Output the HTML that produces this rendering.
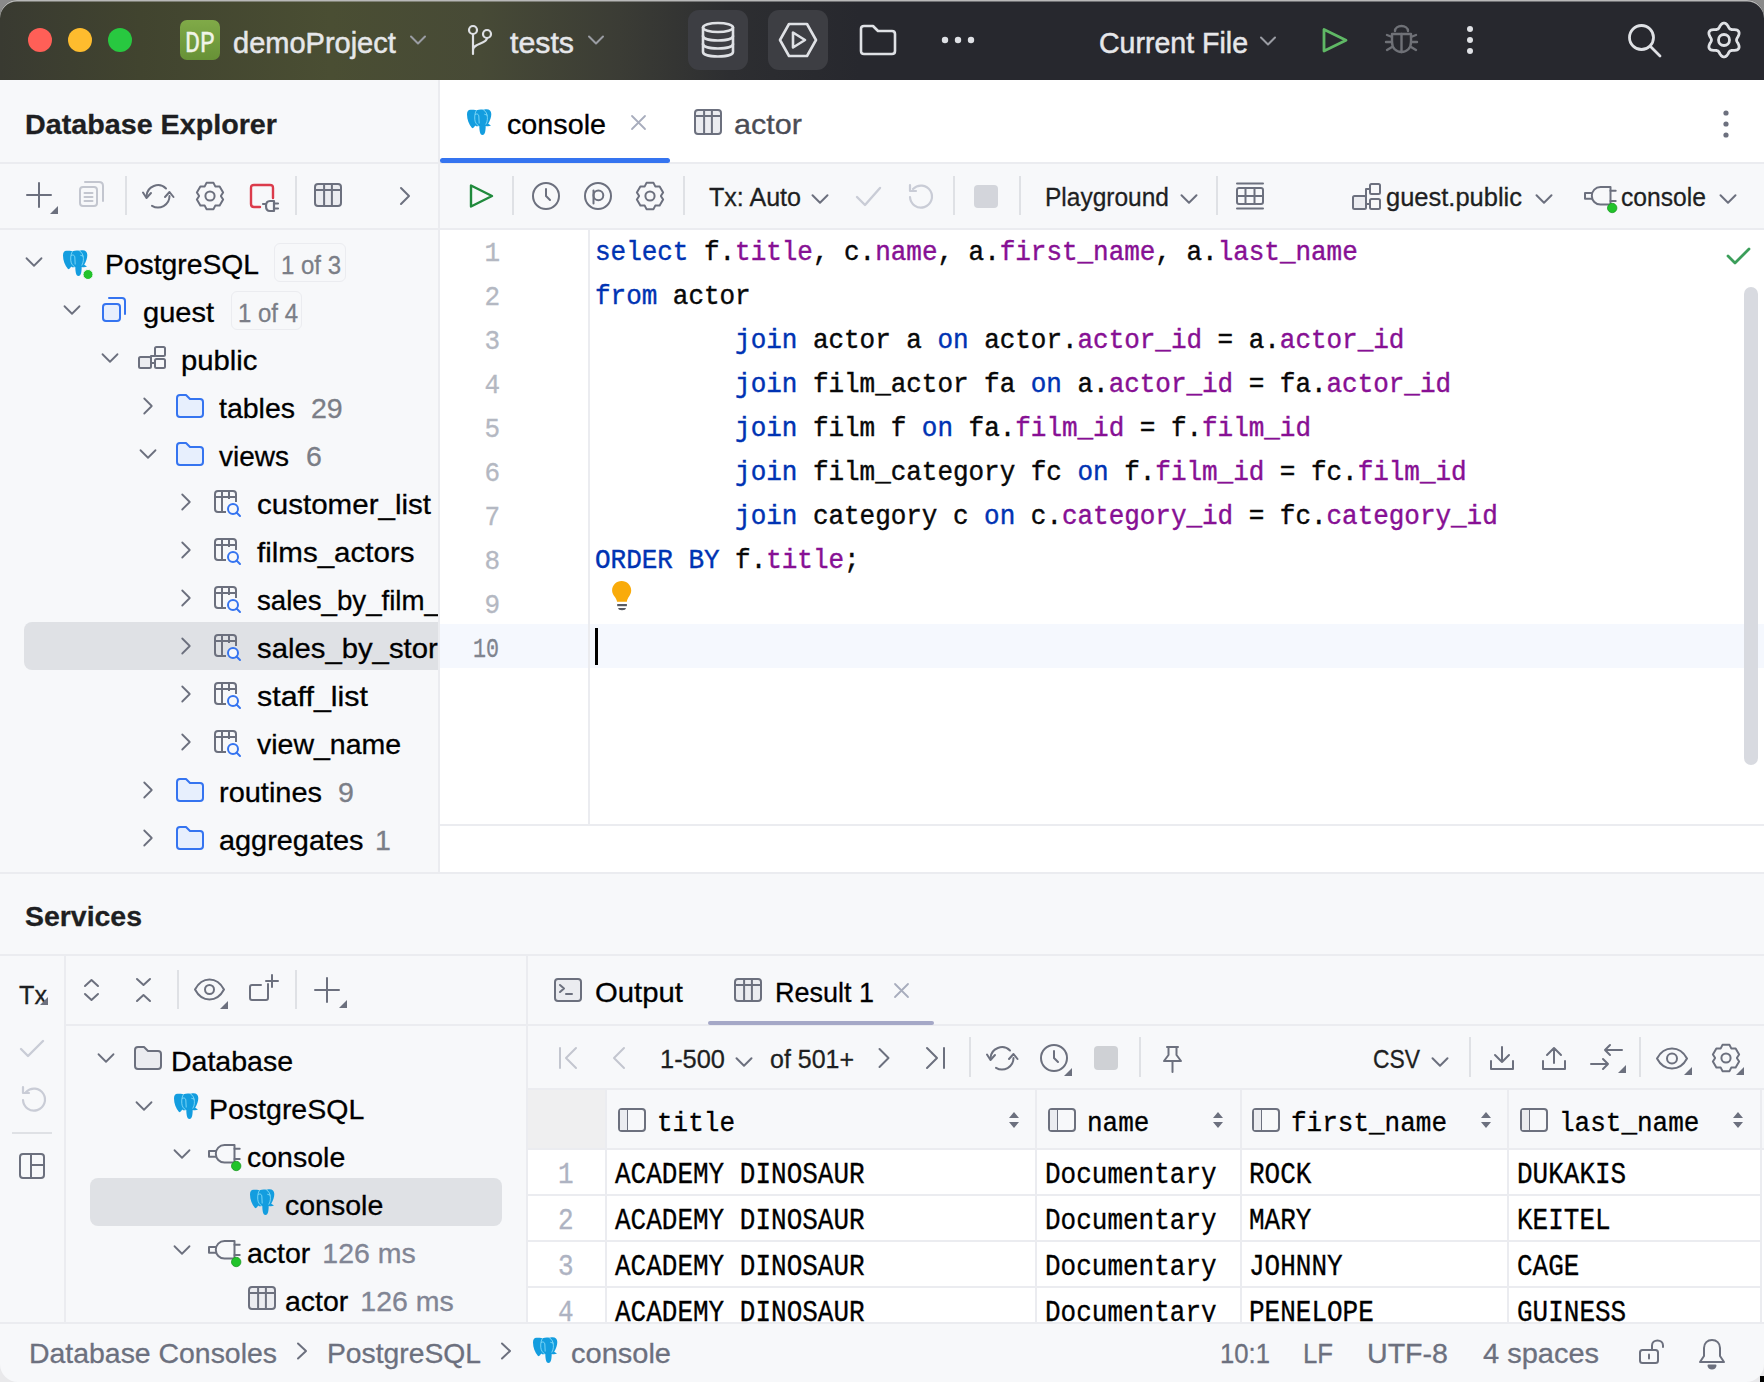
<!DOCTYPE html><html><head><meta charset="utf-8"><style>html,body{margin:0;padding:0;width:1764px;height:1382px;overflow:hidden;background:#f7f8fa;}body{position:relative;}div{-webkit-text-stroke:0.3px currentColor;}</style></head><body>
<div style="position:absolute;left:0px;top:0px;width:1764px;height:1382px;background:#f7f8fa;border-radius:0px;"></div>
<div style="position:absolute;left:0px;top:0px;width:20px;height:20px;background:#8a8a8a;border-radius:0px;"></div>
<div style="position:absolute;left:1744px;top:0px;width:20px;height:20px;background:#8a8a8a;border-radius:0px;"></div>
<div style="position:absolute;left:0px;top:0px;width:1764px;height:80px;background:#27282e;border-radius:0px;border-radius:17px 17px 0 0;box-shadow:inset 0 1.5px 0 #b8b8b8;background:linear-gradient(90deg,#393a31 0px,#41442f 140px,#4a4e33 330px,#474a36 480px,#3b3c35 620px,#2d2e31 730px,#27282e 860px);"></div>
<div style="position:absolute;left:440px;top:80px;width:1324px;height:83px;background:#ffffff;border-radius:0px;"></div>
<div style="position:absolute;left:440px;top:230px;width:1324px;height:642px;background:#ffffff;border-radius:0px;"></div>
<div style="position:absolute;left:438px;top:80px;width:2px;height:792px;background:#ebecf0;border-radius:0px;"></div>
<div style="position:absolute;left:0px;top:162px;width:440px;height:2px;background:#ebecf0;border-radius:0px;"></div>
<div style="position:absolute;left:440px;top:162px;width:1324px;height:2px;background:#ebecf0;border-radius:0px;"></div>
<div style="position:absolute;left:0px;top:228px;width:1764px;height:2px;background:#ebecf0;border-radius:0px;"></div>
<div style="position:absolute;left:588px;top:230px;width:2px;height:594px;background:#ebecf0;border-radius:0px;"></div>
<div style="position:absolute;left:440px;top:824px;width:1324px;height:2px;background:#ebecf0;border-radius:0px;"></div>
<div style="position:absolute;left:0px;top:872px;width:1764px;height:2px;background:#ebecf0;border-radius:0px;"></div>
<div style="position:absolute;left:0px;top:954px;width:1764px;height:2px;background:#ebecf0;border-radius:0px;"></div>
<div style="position:absolute;left:64px;top:956px;width:2px;height:366px;background:#ebecf0;border-radius:0px;"></div>
<div style="position:absolute;left:66px;top:1024px;width:1698px;height:2px;background:#ebecf0;border-radius:0px;"></div>
<div style="position:absolute;left:526px;top:956px;width:2px;height:366px;background:#ebecf0;border-radius:0px;"></div>
<div style="position:absolute;left:528px;top:1088px;width:1236px;height:2px;background:#ebecf0;border-radius:0px;"></div>
<div style="position:absolute;left:0px;top:1322px;width:1764px;height:2px;background:#ebecf0;border-radius:0px;"></div>
<div style="position:absolute;left:180px;top:20px;width:40px;height:40px;background:#6d9a3a;border-radius:7px;background:linear-gradient(180deg,#80aa48,#679136);"></div>
<div style="position:absolute;left:185px;top:29.18px;font:400 28px/31.72px 'Liberation Mono', monospace;color:#f0f4e8;white-space:pre;transform:scale(0.8927,1.0800);transform-origin:0 23.32px;">DP</div>
<div style="position:absolute;left:233px;top:26.75px;font:400 29px/32.39px 'Liberation Sans', sans-serif;color:#e6e7ea;white-space:pre;-webkit-text-stroke:0.5px #e6e7ea;">demoProject</div>
<div style="position:absolute;left:510px;top:26.75px;font:400 29px/32.39px 'Liberation Sans', sans-serif;color:#e6e7ea;white-space:pre;transform:scale(1.0450,1.0000);transform-origin:0 26.25px;-webkit-text-stroke:0.5px #e6e7ea;">tests</div>
<div style="position:absolute;left:688px;top:10px;width:60px;height:60px;background:#3d3e43;border-radius:11px;"></div>
<div style="position:absolute;left:768px;top:10px;width:60px;height:60px;background:#3d3e43;border-radius:11px;"></div>
<div style="position:absolute;left:1099px;top:26.75px;font:400 29px/32.39px 'Liberation Sans', sans-serif;color:#e6e7ea;white-space:pre;transform:scale(0.9836,1.0000);transform-origin:0 26.25px;-webkit-text-stroke:0.5px #e6e7ea;">Current File</div>
<div style="position:absolute;left:25px;top:108.81px;font:700 28.5px/31.83px 'Liberation Sans', sans-serif;color:#1e1f22;white-space:pre;transform:scale(1.0068,1.0000);transform-origin:0 25.79px;">Database Explorer</div>
<div style="position:absolute;left:125px;top:176px;width:2px;height:39px;background:#dfe1e5;border-radius:0px;"></div>
<div style="position:absolute;left:295px;top:176px;width:2px;height:39px;background:#dfe1e5;border-radius:0px;"></div>
<div style="position:absolute;left:24px;top:622px;width:460px;height:48px;background:#dfe1e5;border-radius:8px;"></div>
<div style="position:absolute;left:105px;top:248.71px;font:400 28.5px/31.83px 'Liberation Sans', sans-serif;color:#000000;white-space:pre;transform:scale(0.9919,1.0000);transform-origin:0 25.79px;">PostgreSQL</div>
<div style="position:absolute;left:274px;top:243px;width:72px;height:39px;background:rgba(0,0,0,0);border-radius:6px;border:1.5px solid #ebecf0;box-sizing:border-box;"></div>
<div style="position:absolute;left:280.5px;top:251.88px;font:400 25px/27.93px 'Liberation Sans', sans-serif;color:#7b7e87;white-space:pre;transform:scale(0.9593,1.0000);transform-origin:0 22.62px;">1 of 3</div>
<div style="position:absolute;left:143px;top:296.71px;font:400 28.5px/31.83px 'Liberation Sans', sans-serif;color:#000000;white-space:pre;transform:scale(1.0184,1.0000);transform-origin:0 25.79px;">guest</div>
<div style="position:absolute;left:231px;top:291px;width:71px;height:39px;background:rgba(0,0,0,0);border-radius:6px;border:1.5px solid #ebecf0;box-sizing:border-box;"></div>
<div style="position:absolute;left:237.5px;top:299.88px;font:400 25px/27.93px 'Liberation Sans', sans-serif;color:#7b7e87;white-space:pre;transform:scale(0.9593,1.0000);transform-origin:0 22.62px;">1 of 4</div>
<div style="position:absolute;left:181px;top:344.71px;font:400 28.5px/31.83px 'Liberation Sans', sans-serif;color:#000000;white-space:pre;transform:scale(1.0273,1.0000);transform-origin:0 25.79px;">public</div>
<div style="position:absolute;left:219px;top:392.71px;font:400 28.5px/31.83px 'Liberation Sans', sans-serif;color:#000000;white-space:pre;">tables</div>
<div style="position:absolute;left:311px;top:392.71px;font:400 28.5px/31.83px 'Liberation Sans', sans-serif;color:#7b7e87;white-space:pre;">29</div>
<div style="position:absolute;left:219px;top:440.71px;font:400 28.5px/31.83px 'Liberation Sans', sans-serif;color:#000000;white-space:pre;transform:scale(0.9822,1.0000);transform-origin:0 25.79px;">views</div>
<div style="position:absolute;left:306px;top:440.71px;font:400 28.5px/31.83px 'Liberation Sans', sans-serif;color:#7b7e87;white-space:pre;">6</div>
<div style="position:absolute;left:257px;top:488.71px;font:400 28.5px/31.83px 'Liberation Sans', sans-serif;color:#000000;white-space:pre;transform:scale(1.0364,1.0000);transform-origin:0 25.79px;">customer_list</div>
<div style="position:absolute;left:257px;top:536.71px;font:400 28.5px/31.83px 'Liberation Sans', sans-serif;color:#000000;white-space:pre;transform:scale(1.0359,1.0000);transform-origin:0 25.79px;">films_actors</div>
<div style="position:absolute;left:257px;top:584.71px;font:400 28.5px/31.83px 'Liberation Sans', sans-serif;color:#000000;white-space:pre;transform:scale(0.9704,1.0000);transform-origin:0 25.79px;">sales_by_film_category</div>
<div style="position:absolute;left:257px;top:632.71px;font:400 28.5px/31.83px 'Liberation Sans', sans-serif;color:#000000;white-space:pre;transform:scale(1.0277,1.0000);transform-origin:0 25.79px;">sales_by_store</div>
<div style="position:absolute;left:257px;top:680.71px;font:400 28.5px/31.83px 'Liberation Sans', sans-serif;color:#000000;white-space:pre;transform:scale(1.0671,1.0000);transform-origin:0 25.79px;">staff_list</div>
<div style="position:absolute;left:257px;top:728.71px;font:400 28.5px/31.83px 'Liberation Sans', sans-serif;color:#000000;white-space:pre;">view_name</div>
<div style="position:absolute;left:219px;top:776.71px;font:400 28.5px/31.83px 'Liberation Sans', sans-serif;color:#000000;white-space:pre;transform:scale(1.0158,1.0000);transform-origin:0 25.79px;">routines</div>
<div style="position:absolute;left:338px;top:776.71px;font:400 28.5px/31.83px 'Liberation Sans', sans-serif;color:#7b7e87;white-space:pre;">9</div>
<div style="position:absolute;left:219px;top:824.71px;font:400 28.5px/31.83px 'Liberation Sans', sans-serif;color:#000000;white-space:pre;transform:scale(1.0132,1.0000);transform-origin:0 25.79px;">aggregates</div>
<div style="position:absolute;left:375px;top:824.71px;font:400 28.5px/31.83px 'Liberation Sans', sans-serif;color:#7b7e87;white-space:pre;">1</div>
<div style="position:absolute;left:440px;top:230px;width:1324px;height:642px;background:#ffffff;border-radius:0px;"></div>
<div style="position:absolute;left:438px;top:80px;width:2px;height:792px;background:#ebecf0;border-radius:0px;"></div>
<div style="position:absolute;left:0px;top:162px;width:440px;height:2px;background:#ebecf0;border-radius:0px;"></div>
<div style="position:absolute;left:440px;top:162px;width:1324px;height:2px;background:#ebecf0;border-radius:0px;"></div>
<div style="position:absolute;left:0px;top:228px;width:1764px;height:2px;background:#ebecf0;border-radius:0px;"></div>
<div style="position:absolute;left:588px;top:230px;width:2px;height:594px;background:#ebecf0;border-radius:0px;"></div>
<div style="position:absolute;left:440px;top:824px;width:1324px;height:2px;background:#ebecf0;border-radius:0px;"></div>
<div style="position:absolute;left:507px;top:108.91px;font:400 28.5px/31.83px 'Liberation Sans', sans-serif;color:#000000;white-space:pre;transform:scale(1.0078,1.0000);transform-origin:0 25.79px;">console</div>
<div style="position:absolute;left:440px;top:158px;width:230px;height:5px;background:#3574f0;border-radius:2.5px;"></div>
<div style="position:absolute;left:734px;top:108.91px;font:400 28.5px/31.83px 'Liberation Sans', sans-serif;color:#4b4d55;white-space:pre;transform:scale(1.0732,1.0000);transform-origin:0 25.79px;">actor</div>
<div style="position:absolute;left:512px;top:176px;width:2px;height:39px;background:#dfe1e5;border-radius:0px;"></div>
<div style="position:absolute;left:683px;top:176px;width:2px;height:39px;background:#dfe1e5;border-radius:0px;"></div>
<div style="position:absolute;left:709px;top:183.47px;font:400 26px/29.04px 'Liberation Sans', sans-serif;color:#1e1f22;white-space:pre;transform:scale(0.9645,1.0000);transform-origin:0 23.53px;">Tx: Auto</div>
<div style="position:absolute;left:953px;top:176px;width:2px;height:39px;background:#dfe1e5;border-radius:0px;"></div>
<div style="position:absolute;left:974px;top:185px;width:24px;height:23px;background:#d3d5db;border-radius:4px;"></div>
<div style="position:absolute;left:1019px;top:176px;width:2px;height:39px;background:#dfe1e5;border-radius:0px;"></div>
<div style="position:absolute;left:1045px;top:183.47px;font:400 26px/29.04px 'Liberation Sans', sans-serif;color:#1e1f22;white-space:pre;transform:scale(0.9427,1.0000);transform-origin:0 23.53px;">Playground</div>
<div style="position:absolute;left:1216px;top:176px;width:2px;height:39px;background:#dfe1e5;border-radius:0px;"></div>
<div style="position:absolute;left:1386px;top:183.47px;font:400 26px/29.04px 'Liberation Sans', sans-serif;color:#1e1f22;white-space:pre;transform:scale(0.9801,1.0000);transform-origin:0 23.53px;">guest.public</div>
<div style="position:absolute;left:1621px;top:183.47px;font:400 26px/29.04px 'Liberation Sans', sans-serif;color:#1e1f22;white-space:pre;transform:scale(0.9485,1.0000);transform-origin:0 23.53px;">console</div>
<div style="position:absolute;left:440px;top:624px;width:1324px;height:44px;background:#f5f8fe;border-radius:0px;"></div>
<div style="position:absolute;left:588px;top:624px;width:2px;height:44px;background:#ebecf0;border-radius:0px;"></div>
<div style="position:absolute;left:595px;top:239.34px;font:400 26px/29.46px &quot;Liberation Mono&quot;, monospace;white-space:pre;letter-spacing:-0.040px;-webkit-text-stroke:0.4px currentColor;transform:scaleY(1.05);transform-origin:0 21.66px;"><span style="color:#0033b3">select</span><span style="color:#080808"> f.</span><span style="color:#871094">title</span><span style="color:#080808">, c.</span><span style="color:#871094">name</span><span style="color:#080808">, a.</span><span style="color:#871094">first_name</span><span style="color:#080808">, a.</span><span style="color:#871094">last_name</span></div>
<div style="position:absolute;left:595px;top:283.34px;font:400 26px/29.46px &quot;Liberation Mono&quot;, monospace;white-space:pre;letter-spacing:-0.040px;-webkit-text-stroke:0.4px currentColor;transform:scaleY(1.05);transform-origin:0 21.66px;"><span style="color:#0033b3">from</span><span style="color:#080808"> actor</span></div>
<div style="position:absolute;left:595px;top:327.34px;font:400 26px/29.46px &quot;Liberation Mono&quot;, monospace;white-space:pre;letter-spacing:-0.040px;-webkit-text-stroke:0.4px currentColor;transform:scaleY(1.05);transform-origin:0 21.66px;"><span style="color:#080808">         </span><span style="color:#0033b3">join</span><span style="color:#080808"> actor a </span><span style="color:#0033b3">on</span><span style="color:#080808"> actor.</span><span style="color:#871094">actor_id</span><span style="color:#080808"> = a.</span><span style="color:#871094">actor_id</span></div>
<div style="position:absolute;left:595px;top:371.34px;font:400 26px/29.46px &quot;Liberation Mono&quot;, monospace;white-space:pre;letter-spacing:-0.040px;-webkit-text-stroke:0.4px currentColor;transform:scaleY(1.05);transform-origin:0 21.66px;"><span style="color:#080808">         </span><span style="color:#0033b3">join</span><span style="color:#080808"> film_actor fa </span><span style="color:#0033b3">on</span><span style="color:#080808"> a.</span><span style="color:#871094">actor_id</span><span style="color:#080808"> = fa.</span><span style="color:#871094">actor_id</span></div>
<div style="position:absolute;left:595px;top:415.34px;font:400 26px/29.46px &quot;Liberation Mono&quot;, monospace;white-space:pre;letter-spacing:-0.040px;-webkit-text-stroke:0.4px currentColor;transform:scaleY(1.05);transform-origin:0 21.66px;"><span style="color:#080808">         </span><span style="color:#0033b3">join</span><span style="color:#080808"> film f </span><span style="color:#0033b3">on</span><span style="color:#080808"> fa.</span><span style="color:#871094">film_id</span><span style="color:#080808"> = f.</span><span style="color:#871094">film_id</span></div>
<div style="position:absolute;left:595px;top:459.34px;font:400 26px/29.46px &quot;Liberation Mono&quot;, monospace;white-space:pre;letter-spacing:-0.040px;-webkit-text-stroke:0.4px currentColor;transform:scaleY(1.05);transform-origin:0 21.66px;"><span style="color:#080808">         </span><span style="color:#0033b3">join</span><span style="color:#080808"> film_category fc </span><span style="color:#0033b3">on</span><span style="color:#080808"> f.</span><span style="color:#871094">film_id</span><span style="color:#080808"> = fc.</span><span style="color:#871094">film_id</span></div>
<div style="position:absolute;left:595px;top:503.34px;font:400 26px/29.46px &quot;Liberation Mono&quot;, monospace;white-space:pre;letter-spacing:-0.040px;-webkit-text-stroke:0.4px currentColor;transform:scaleY(1.05);transform-origin:0 21.66px;"><span style="color:#080808">         </span><span style="color:#0033b3">join</span><span style="color:#080808"> category c </span><span style="color:#0033b3">on</span><span style="color:#080808"> c.</span><span style="color:#871094">category_id</span><span style="color:#080808"> = fc.</span><span style="color:#871094">category_id</span></div>
<div style="position:absolute;left:595px;top:547.34px;font:400 26px/29.46px &quot;Liberation Mono&quot;, monospace;white-space:pre;letter-spacing:-0.040px;-webkit-text-stroke:0.4px currentColor;transform:scaleY(1.05);transform-origin:0 21.66px;"><span style="color:#0033b3">ORDER BY</span><span style="color:#080808"> f.</span><span style="color:#871094">title</span><span style="color:#080808">;</span></div>
<div style="position:absolute;left:484.4px;top:239.84px;font:400 26px/29.46px 'Liberation Mono', monospace;color:#b4b8c2;white-space:pre;transform:scale(1.0000,1.0600);transform-origin:0 21.66px;">1</div>
<div style="position:absolute;left:484.4px;top:283.84px;font:400 26px/29.46px 'Liberation Mono', monospace;color:#b4b8c2;white-space:pre;transform:scale(1.0000,1.0600);transform-origin:0 21.66px;">2</div>
<div style="position:absolute;left:484.4px;top:327.84px;font:400 26px/29.46px 'Liberation Mono', monospace;color:#b4b8c2;white-space:pre;transform:scale(1.0000,1.0600);transform-origin:0 21.66px;">3</div>
<div style="position:absolute;left:484.4px;top:371.84px;font:400 26px/29.46px 'Liberation Mono', monospace;color:#b4b8c2;white-space:pre;transform:scale(1.0000,1.0600);transform-origin:0 21.66px;">4</div>
<div style="position:absolute;left:484.4px;top:415.84px;font:400 26px/29.46px 'Liberation Mono', monospace;color:#b4b8c2;white-space:pre;transform:scale(1.0000,1.0600);transform-origin:0 21.66px;">5</div>
<div style="position:absolute;left:484.4px;top:459.84px;font:400 26px/29.46px 'Liberation Mono', monospace;color:#b4b8c2;white-space:pre;transform:scale(1.0000,1.0600);transform-origin:0 21.66px;">6</div>
<div style="position:absolute;left:484.4px;top:503.84px;font:400 26px/29.46px 'Liberation Mono', monospace;color:#b4b8c2;white-space:pre;transform:scale(1.0000,1.0600);transform-origin:0 21.66px;">7</div>
<div style="position:absolute;left:484.4px;top:547.84px;font:400 26px/29.46px 'Liberation Mono', monospace;color:#b4b8c2;white-space:pre;transform:scale(1.0000,1.0600);transform-origin:0 21.66px;">8</div>
<div style="position:absolute;left:484.4px;top:591.84px;font:400 26px/29.46px 'Liberation Mono', monospace;color:#b4b8c2;white-space:pre;transform:scale(1.0000,1.0600);transform-origin:0 21.66px;">9</div>
<div style="position:absolute;left:473px;top:635.84px;font:400 26px/29.46px 'Liberation Mono', monospace;color:#80848f;white-space:pre;transform:scale(0.8332,1.0600);transform-origin:0 21.66px;">10</div>
<div style="position:absolute;left:595px;top:628px;width:3px;height:37px;background:#000000;border-radius:0px;"></div>
<div style="position:absolute;left:1744px;top:287px;width:14px;height:478px;background:#d8dae0;border-radius:7px;"></div>
<div style="position:absolute;left:25px;top:901.01px;font:700 28.5px/31.83px 'Liberation Sans', sans-serif;color:#1e1f22;white-space:pre;transform:scale(0.9977,1.0000);transform-origin:0 25.79px;">Services</div>
<div style="position:absolute;left:19px;top:981.47px;font:400 26px/29.04px 'Liberation Sans', sans-serif;color:#1e1f22;white-space:pre;transform:scale(0.9695,1.0000);transform-origin:0 23.53px;">Tx</div>
<div style="position:absolute;left:12px;top:1132px;width:40px;height:2px;background:#dfe1e5;border-radius:0px;"></div>
<div style="position:absolute;left:177px;top:970px;width:2px;height:39px;background:#dfe1e5;border-radius:0px;"></div>
<div style="position:absolute;left:295px;top:970px;width:2px;height:39px;background:#dfe1e5;border-radius:0px;"></div>
<div style="position:absolute;left:90px;top:1178px;width:412px;height:48px;background:#dfe1e5;border-radius:8px;"></div>
<div style="position:absolute;left:171px;top:1045.71px;font:400 28.5px/31.83px 'Liberation Sans', sans-serif;color:#000000;white-space:pre;">Database</div>
<div style="position:absolute;left:209px;top:1093.71px;font:400 28.5px/31.83px 'Liberation Sans', sans-serif;color:#000000;white-space:pre;">PostgreSQL</div>
<div style="position:absolute;left:247px;top:1141.71px;font:400 28.5px/31.83px 'Liberation Sans', sans-serif;color:#000000;white-space:pre;">console</div>
<div style="position:absolute;left:285px;top:1189.71px;font:400 28.5px/31.83px 'Liberation Sans', sans-serif;color:#000000;white-space:pre;">console</div>
<div style="position:absolute;left:247px;top:1237.71px;font:400 28.5px/31.83px 'Liberation Sans', sans-serif;color:#000000;white-space:pre;">actor</div>
<div style="position:absolute;left:322.3612890625px;top:1237.71px;font:400 28.5px/31.83px 'Liberation Sans', sans-serif;color:#818594;white-space:pre;">126 ms</div>
<div style="position:absolute;left:285px;top:1285.71px;font:400 28.5px/31.83px 'Liberation Sans', sans-serif;color:#000000;white-space:pre;">actor</div>
<div style="position:absolute;left:360.3612890625px;top:1285.71px;font:400 28.5px/31.83px 'Liberation Sans', sans-serif;color:#818594;white-space:pre;">126 ms</div>
<div style="position:absolute;left:595px;top:976.81px;font:400 28.5px/31.83px 'Liberation Sans', sans-serif;color:#000000;white-space:pre;transform:scale(1.0286,1.0000);transform-origin:0 25.79px;">Output</div>
<div style="position:absolute;left:775px;top:976.81px;font:400 28.5px/31.83px 'Liberation Sans', sans-serif;color:#000000;white-space:pre;transform:scale(0.9469,1.0000);transform-origin:0 25.79px;">Result 1</div>
<div style="position:absolute;left:708px;top:1021px;width:226px;height:4px;background:#a5a8c7;border-radius:2px;"></div>
<div style="position:absolute;left:660px;top:1045.47px;font:400 26px/29.04px 'Liberation Sans', sans-serif;color:#1e1f22;white-space:pre;transform:scale(0.9774,1.0000);transform-origin:0 23.53px;">1-500</div>
<div style="position:absolute;left:770px;top:1045.47px;font:400 26px/29.04px 'Liberation Sans', sans-serif;color:#1e1f22;white-space:pre;transform:scale(0.9603,1.0000);transform-origin:0 23.53px;">of 501+</div>
<div style="position:absolute;left:969px;top:1037px;width:2px;height:40px;background:#dfe1e5;border-radius:0px;"></div>
<div style="position:absolute;left:1094px;top:1046px;width:24px;height:24px;background:#cfd1d5;border-radius:4px;"></div>
<div style="position:absolute;left:1139px;top:1037px;width:2px;height:40px;background:#dfe1e5;border-radius:0px;"></div>
<div style="position:absolute;left:1373px;top:1045.47px;font:400 26px/29.04px 'Liberation Sans', sans-serif;color:#1e1f22;white-space:pre;transform:scale(0.8791,1.0000);transform-origin:0 23.53px;">CSV</div>
<div style="position:absolute;left:1469px;top:1037px;width:2px;height:40px;background:#dfe1e5;border-radius:0px;"></div>
<div style="position:absolute;left:1639px;top:1037px;width:2px;height:40px;background:#dfe1e5;border-radius:0px;"></div>
<div style="position:absolute;left:528px;top:1090px;width:1236px;height:232px;background:#ffffff;border-radius:0px;"></div>
<div style="position:absolute;left:528px;top:1090px;width:1236px;height:58px;background:#f7f8fa;border-radius:0px;"></div>
<div style="position:absolute;left:528px;top:1090px;width:77px;height:58px;background:#efeff0;border-radius:0px;"></div>
<div style="position:absolute;left:528px;top:1148px;width:1236px;height:2px;background:#ebecf0;border-radius:0px;"></div>
<div style="position:absolute;left:528px;top:1194px;width:1234px;height:2px;background:#ebecf0;border-radius:0px;"></div>
<div style="position:absolute;left:528px;top:1240px;width:1234px;height:2px;background:#ebecf0;border-radius:0px;"></div>
<div style="position:absolute;left:528px;top:1286px;width:1234px;height:2px;background:#ebecf0;border-radius:0px;"></div>
<div style="position:absolute;left:605px;top:1090px;width:2px;height:232px;background:#ebecf0;border-radius:0px;"></div>
<div style="position:absolute;left:1035px;top:1090px;width:2px;height:232px;background:#ebecf0;border-radius:0px;"></div>
<div style="position:absolute;left:1240px;top:1090px;width:2px;height:232px;background:#ebecf0;border-radius:0px;"></div>
<div style="position:absolute;left:1507px;top:1090px;width:2px;height:232px;background:#ebecf0;border-radius:0px;"></div>
<div style="position:absolute;left:1760px;top:1090px;width:2px;height:232px;background:#ebecf0;border-radius:0px;"></div>
<div style="position:absolute;left:528px;top:1088px;width:1236px;height:2px;background:#ebecf0;border-radius:0px;"></div>
<div style="position:absolute;left:657px;top:1109.84px;font:400 26px/29.46px 'Liberation Mono', monospace;color:#000000;white-space:pre;transform:scale(1.0000,1.0600);transform-origin:0 21.66px;">title</div>
<div style="position:absolute;left:1087px;top:1109.84px;font:400 26px/29.46px 'Liberation Mono', monospace;color:#000000;white-space:pre;transform:scale(1.0000,1.0600);transform-origin:0 21.66px;">name</div>
<div style="position:absolute;left:1291px;top:1109.84px;font:400 26px/29.46px 'Liberation Mono', monospace;color:#000000;white-space:pre;transform:scale(1.0000,1.0600);transform-origin:0 21.66px;">first_name</div>
<div style="position:absolute;left:1559px;top:1109.84px;font:400 26px/29.46px 'Liberation Mono', monospace;color:#000000;white-space:pre;transform:scale(1.0000,1.0600);transform-origin:0 21.66px;">last_name</div>
<div style="position:absolute;left:558px;top:1161.84px;font:400 26px/29.46px 'Liberation Mono', monospace;color:#aeb3c2;white-space:pre;transform:scale(1.0000,1.1000);transform-origin:0 21.66px;">1</div>
<div style="position:absolute;left:615px;top:1161.84px;font:400 26px/29.46px 'Liberation Mono', monospace;color:#000000;white-space:pre;transform:scale(1.0000,1.1200);transform-origin:0 21.66px;">ACADEMY DINOSAUR</div>
<div style="position:absolute;left:1045px;top:1161.84px;font:400 26px/29.46px 'Liberation Mono', monospace;color:#000000;white-space:pre;transform:scale(1.0000,1.1200);transform-origin:0 21.66px;">Documentary</div>
<div style="position:absolute;left:1249px;top:1161.84px;font:400 26px/29.46px 'Liberation Mono', monospace;color:#000000;white-space:pre;transform:scale(1.0000,1.1200);transform-origin:0 21.66px;">ROCK</div>
<div style="position:absolute;left:1517px;top:1161.84px;font:400 26px/29.46px 'Liberation Mono', monospace;color:#000000;white-space:pre;transform:scale(1.0000,1.1200);transform-origin:0 21.66px;">DUKAKIS</div>
<div style="position:absolute;left:558px;top:1207.84px;font:400 26px/29.46px 'Liberation Mono', monospace;color:#aeb3c2;white-space:pre;transform:scale(1.0000,1.1000);transform-origin:0 21.66px;">2</div>
<div style="position:absolute;left:615px;top:1207.84px;font:400 26px/29.46px 'Liberation Mono', monospace;color:#000000;white-space:pre;transform:scale(1.0000,1.1200);transform-origin:0 21.66px;">ACADEMY DINOSAUR</div>
<div style="position:absolute;left:1045px;top:1207.84px;font:400 26px/29.46px 'Liberation Mono', monospace;color:#000000;white-space:pre;transform:scale(1.0000,1.1200);transform-origin:0 21.66px;">Documentary</div>
<div style="position:absolute;left:1249px;top:1207.84px;font:400 26px/29.46px 'Liberation Mono', monospace;color:#000000;white-space:pre;transform:scale(1.0000,1.1200);transform-origin:0 21.66px;">MARY</div>
<div style="position:absolute;left:1517px;top:1207.84px;font:400 26px/29.46px 'Liberation Mono', monospace;color:#000000;white-space:pre;transform:scale(1.0000,1.1200);transform-origin:0 21.66px;">KEITEL</div>
<div style="position:absolute;left:558px;top:1253.84px;font:400 26px/29.46px 'Liberation Mono', monospace;color:#aeb3c2;white-space:pre;transform:scale(1.0000,1.1000);transform-origin:0 21.66px;">3</div>
<div style="position:absolute;left:615px;top:1253.84px;font:400 26px/29.46px 'Liberation Mono', monospace;color:#000000;white-space:pre;transform:scale(1.0000,1.1200);transform-origin:0 21.66px;">ACADEMY DINOSAUR</div>
<div style="position:absolute;left:1045px;top:1253.84px;font:400 26px/29.46px 'Liberation Mono', monospace;color:#000000;white-space:pre;transform:scale(1.0000,1.1200);transform-origin:0 21.66px;">Documentary</div>
<div style="position:absolute;left:1249px;top:1253.84px;font:400 26px/29.46px 'Liberation Mono', monospace;color:#000000;white-space:pre;transform:scale(1.0000,1.1200);transform-origin:0 21.66px;">JOHNNY</div>
<div style="position:absolute;left:1517px;top:1253.84px;font:400 26px/29.46px 'Liberation Mono', monospace;color:#000000;white-space:pre;transform:scale(1.0000,1.1200);transform-origin:0 21.66px;">CAGE</div>
<div style="position:absolute;left:558px;top:1299.84px;font:400 26px/29.46px 'Liberation Mono', monospace;color:#aeb3c2;white-space:pre;transform:scale(1.0000,1.1000);transform-origin:0 21.66px;">4</div>
<div style="position:absolute;left:615px;top:1299.84px;font:400 26px/29.46px 'Liberation Mono', monospace;color:#000000;white-space:pre;transform:scale(1.0000,1.1200);transform-origin:0 21.66px;">ACADEMY DINOSAUR</div>
<div style="position:absolute;left:1045px;top:1299.84px;font:400 26px/29.46px 'Liberation Mono', monospace;color:#000000;white-space:pre;transform:scale(1.0000,1.1200);transform-origin:0 21.66px;">Documentary</div>
<div style="position:absolute;left:1249px;top:1299.84px;font:400 26px/29.46px 'Liberation Mono', monospace;color:#000000;white-space:pre;transform:scale(1.0000,1.1200);transform-origin:0 21.66px;">PENELOPE</div>
<div style="position:absolute;left:1517px;top:1299.84px;font:400 26px/29.46px 'Liberation Mono', monospace;color:#000000;white-space:pre;transform:scale(1.0000,1.1200);transform-origin:0 21.66px;">GUINESS</div>
<div style="position:absolute;left:0px;top:1322px;width:1764px;height:60px;background:#f7f8fa;border-radius:0px;"></div>
<div style="position:absolute;left:0px;top:1322px;width:1764px;height:2px;background:#ebecf0;border-radius:0px;"></div>
<div style="position:absolute;left:29px;top:1337.71px;font:400 28.5px/31.83px 'Liberation Sans', sans-serif;color:#6c707e;white-space:pre;transform:scale(0.9970,1.0000);transform-origin:0 25.79px;">Database Consoles</div>
<div style="position:absolute;left:327px;top:1337.71px;font:400 28.5px/31.83px 'Liberation Sans', sans-serif;color:#6c707e;white-space:pre;transform:scale(0.9919,1.0000);transform-origin:0 25.79px;">PostgreSQL</div>
<div style="position:absolute;left:571px;top:1337.71px;font:400 28.5px/31.83px 'Liberation Sans', sans-serif;color:#6c707e;white-space:pre;transform:scale(1.0180,1.0000);transform-origin:0 25.79px;">console</div>
<div style="position:absolute;left:1220px;top:1337.71px;font:400 28.5px/31.83px 'Liberation Sans', sans-serif;color:#6c707e;white-space:pre;transform:scale(0.9014,1.0000);transform-origin:0 25.79px;">10:1</div>
<div style="position:absolute;left:1303px;top:1337.71px;font:400 28.5px/31.83px 'Liberation Sans', sans-serif;color:#6c707e;white-space:pre;transform:scale(0.9020,1.0000);transform-origin:0 25.79px;">LF</div>
<div style="position:absolute;left:1367px;top:1337.71px;font:400 28.5px/31.83px 'Liberation Sans', sans-serif;color:#6c707e;white-space:pre;transform:scale(1.0032,1.0000);transform-origin:0 25.79px;">UTF-8</div>
<div style="position:absolute;left:1483px;top:1337.71px;font:400 28.5px/31.83px 'Liberation Sans', sans-serif;color:#6c707e;white-space:pre;transform:scale(1.0169,1.0000);transform-origin:0 25.79px;">4 spaces</div>
<svg style="position:absolute;left:0;top:0" width="1764" height="1382" viewBox="0 0 1764 1382"><circle cx="40" cy="40" r="12" fill="#ff5f57"/><circle cx="80" cy="40" r="12" fill="#febc2e"/><circle cx="120" cy="40" r="12" fill="#28c840"/><path d="M411.0 36.5 L418 43.5 L425.0 36.5" fill="none" stroke="#9a9ca3" stroke-width="2" stroke-linecap="round" stroke-linejoin="round"/><g transform="translate(466,24)" fill="none" stroke="#dfe1e5" stroke-width="2.2" stroke-linecap="round" stroke-linejoin="round" ><circle cx="7" cy="6" r="4"/><circle cx="21" cy="10" r="4"/><path d="M7 10V30M21 14C21 20 7 19 7 26"/></g><path d="M589.0 36.5 L596 43.5 L603.0 36.5" fill="none" stroke="#9a9ca3" stroke-width="2" stroke-linecap="round" stroke-linejoin="round"/><g transform="translate(702,22)" fill="none" stroke="#dfe1e5" stroke-width="2.6" stroke-linecap="round" stroke-linejoin="round" ><ellipse cx="16" cy="5.5" rx="15" ry="4.5"/><path d="M1 5.5V30C1 33 7.5 34.5 16 34.5S31 33 31 30V5.5"/><path d="M1 14C1 17 7.5 18.5 16 18.5S31 17 31 14M1 22C1 25 7.5 26.5 16 26.5S31 25 31 22"/></g><g transform="translate(779,23)" fill="none" stroke="#dfe1e5" stroke-width="2.6" stroke-linecap="round" stroke-linejoin="round" ><path d="M10 1H28L37 17L28 33H10L1 17Z"/><path d="M14 9.5V24.5L26 17Z"/></g><g transform="translate(860,25)" fill="none" stroke="#dfe1e5" stroke-width="2.6" stroke-linecap="round" stroke-linejoin="round" ><path d="M1 4Q1 1 4 1H13L18 6H32Q35 6 35 9V26Q35 29 32 29H4Q1 29 1 26Z"/></g><circle cx="945" cy="40" r="3.2" fill="#dfe1e5"/><circle cx="958" cy="40" r="3.2" fill="#dfe1e5"/><circle cx="971" cy="40" r="3.2" fill="#dfe1e5"/><path d="M1261.0 37.5 L1268 44.5 L1275.0 37.5" fill="none" stroke="#9a9ca3" stroke-width="2" stroke-linecap="round" stroke-linejoin="round"/><g transform="translate(1322,27)" fill="none" stroke="#5fb865" stroke-width="2.8" stroke-linecap="round" stroke-linejoin="round" ><path d="M2 2.5V24L24 13.25Z"/></g><g transform="translate(1386,25)" fill="none" stroke="#6f7177" stroke-width="2.4" stroke-linecap="round" stroke-linejoin="round" ><path d="M9 6C9 3 12 1 15.5 1S22 3 22 6"/><path d="M6 9H25V17C25 23 21 27 15.5 27S6 23 6 17Z"/><path d="M15.5 9V27M1 10L6 12M30 10L25 12M0 17H6M25 17H31M1 25L6 22M30 25L25 22"/></g><circle cx="1470" cy="29" r="3" fill="#dfe1e5"/><circle cx="1470" cy="40" r="3" fill="#dfe1e5"/><circle cx="1470" cy="51" r="3" fill="#dfe1e5"/><g transform="translate(1628,24)" fill="none" stroke="#dfe1e5" stroke-width="2.8" stroke-linecap="round" stroke-linejoin="round" ><circle cx="13.5" cy="13.5" r="12"/><path d="M22.5 22.5L32 32"/></g><path d="M1724.00 23.00L1725.46 23.36L1726.76 24.37L1727.82 25.75L1728.66 27.20L1729.41 28.40L1730.25 29.17L1731.34 29.51L1732.76 29.56L1734.43 29.57L1736.16 29.80L1737.68 30.42L1738.72 31.50L1739.13 32.94L1738.92 34.57L1738.25 36.18L1737.42 37.63L1736.75 38.88L1736.50 40.00L1736.75 41.12L1737.42 42.37L1738.25 43.82L1738.92 45.43L1739.13 47.06L1738.72 48.50L1737.68 49.58L1736.16 50.20L1734.43 50.43L1732.76 50.44L1731.34 50.49L1730.25 50.83L1729.41 51.60L1728.66 52.80L1727.82 54.25L1726.76 55.63L1725.46 56.64L1724.00 57.00L1722.54 56.64L1721.24 55.63L1720.18 54.25L1719.34 52.80L1718.59 51.60L1717.75 50.83L1716.66 50.49L1715.24 50.44L1713.57 50.43L1711.84 50.20L1710.32 49.58L1709.28 48.50L1708.87 47.06L1709.08 45.43L1709.75 43.82L1710.58 42.37L1711.25 41.12L1711.50 40.00L1711.25 38.88L1710.58 37.63L1709.75 36.18L1709.08 34.57L1708.87 32.94L1709.28 31.50L1710.32 30.42L1711.84 29.80L1713.57 29.57L1715.24 29.56L1716.66 29.51L1717.75 29.17L1718.59 28.40L1719.34 27.20L1720.18 25.75L1721.24 24.37L1722.54 23.36L1724.00 23.00Z" fill="none" stroke="#dfe1e5" stroke-width="2.8" stroke-linejoin="round"/><circle cx="1724" cy="40" r="5.5" fill="none" stroke="#dfe1e5" stroke-width="2.8"/><g transform="translate(25,180)" fill="none" stroke="#6c707e" stroke-width="2" stroke-linecap="round" stroke-linejoin="round" ><path d="M14 3V27M2 15H26"/></g><path d="M58 206 L58 214 L50 214 Z" fill="#6c707e" stroke="none"/><g transform="translate(79,181)" fill="none" stroke="#c3c6cf" stroke-width="2" stroke-linecap="round" stroke-linejoin="round" ><rect x="1" y="6" width="17" height="19" rx="3"/><path d="M6 1H20Q24 1 24 5V20"/><path d="M5.5 12H13.5M5.5 16H13.5M5.5 20H13.5"/></g><g transform="translate(142,182)" fill="none" stroke="#6c707e" stroke-width="2" stroke-linecap="round" stroke-linejoin="round" ><path d="M4.5 14 A11.5 11.5 0 0 1 24 6.5"/><path d="M1 10.5 L4.5 16 L9 11"/><path d="M10 23.8 A11.5 11.5 0 0 0 27.5 14"/><path d="M23 15 L27.5 10 L31.5 15"/></g><path d="M204.73 186.35 L206.50 182.86 L213.50 182.86 L215.27 186.35 L215.72 186.61 L219.63 186.40 L223.13 192.46 L221.00 195.74 L221.00 196.26 L223.13 199.54 L219.63 205.60 L215.72 205.39 L215.27 205.65 L213.50 209.14 L206.50 209.14 L204.73 205.65 L204.28 205.39 L200.37 205.60 L196.87 199.54 L199.00 196.26 L199.00 195.74 L196.87 192.46 L200.37 186.40 L204.28 186.61Z" fill="none" stroke="#6c707e" stroke-width="2" stroke-linejoin="round"/><circle cx="210" cy="196" r="4.6" fill="none" stroke="#6c707e" stroke-width="2"/><g transform="translate(250,184)" fill="none" stroke="#db3b4b" stroke-width="2.4" stroke-linecap="round" stroke-linejoin="round" ><path d="M23 14V4Q23 1 20 1H4Q1 1 1 4V20Q1 23 4 23H10"/></g><g transform="translate(261,200)" fill="none" stroke="#6c707e" stroke-width="2.2" stroke-linecap="round" stroke-linejoin="round" ><path d="M2 4H5M13 1V11H9C6.5 11 5 9 5 6S6.5 1 9 1Z"/><path d="M13 3.5H17M13 8.5H17"/></g><rect x="315" y="184" width="26" height="22" rx="3" fill="#ebecf0" stroke="#6c707e" stroke-width="2"/><path d="M315 190H341M324.1 184V206M331.9 184V206" stroke="#6c707e" stroke-width="2"/><path d="M401.0 188.0 L409.0 196 L401.0 204.0" fill="none" stroke="#6c707e" stroke-width="2" stroke-linecap="round" stroke-linejoin="round"/><path d="M26.5 258.25 L34 265.75 L41.5 258.25" fill="none" stroke="#6c707e" stroke-width="1.8" stroke-linecap="round" stroke-linejoin="round"/><g transform="translate(63,250) scale(1.0)"><path d="M3.5 0.8 C1.2 0.8 0 2.8 0 5.5 C0 10.5 2 15.5 4.8 18.8 C5.5 19.6 6.5 19 7.2 18 L8.2 16.5 C9 17.5 10.5 17.6 12 17 L12.3 17 C12.4 21 12.8 26 15.5 26 C18.2 26 18.6 21.5 18.7 17 C20 17.3 22.3 17.5 24 16.5 C22.8 15.8 21.8 15.2 21.2 14.8 C23.2 11.5 24.3 8 24.3 5 C24.3 2 22.5 0.2 19.5 0.2 C18 0.2 17 0.4 16.3 0.8 C14.8 0.3 12 0.3 9.5 1.2 C8 0.9 5.5 0.8 3.5 0.8 Z" fill="#139ddf"/><path d="M9.5 1.2 C8 3.5 7.5 7 7.8 10.5 C8.1 13.5 9.5 15.5 11.8 17 M8.2 5.5 C9.5 4.6 11.3 4.8 11.8 6.8 L12.2 14.5 M16.3 0.8 C19 2.3 20.3 5 20.4 8.5 C20.5 11.5 19.8 13.5 18.7 15.5 M17.3 5.2 C18.3 5.5 19.5 6 20.3 6.2" fill="none" stroke="#a9efff" stroke-opacity="0.85" stroke-width="0.8"/></g><circle cx="88" cy="274.5" r="5" fill="#23c22b" stroke="#f7f8fa" stroke-width="1"/><path d="M64.5 306.25 L72 313.75 L79.5 306.25" fill="none" stroke="#6c707e" stroke-width="1.8" stroke-linecap="round" stroke-linejoin="round"/><g transform="translate(102,297)" fill="none" stroke="#3574f0" stroke-width="2" stroke-linecap="round" stroke-linejoin="round" ><rect x="1" y="7" width="17" height="17" rx="3" fill="#e7effd"/><path d="M7 1H20Q23 1 23 4V17"/></g><path d="M102.5 354.25 L110 361.75 L117.5 354.25" fill="none" stroke="#6c707e" stroke-width="1.8" stroke-linecap="round" stroke-linejoin="round"/><g transform="translate(138,346)" fill="none" stroke="#6c707e" stroke-width="2" stroke-linecap="round" stroke-linejoin="round" ><rect x="1" y="11" width="12" height="11" rx="1.5" fill="#ebecf0"/><rect x="17" y="1" width="10" height="9" rx="1.5"/><rect x="17" y="13" width="10" height="9" rx="1.5"/><path d="M13 17H17M13 17V10H17"/></g><path d="M144.25 398.5 L151.75 406 L144.25 413.5" fill="none" stroke="#6c707e" stroke-width="1.8" stroke-linecap="round" stroke-linejoin="round"/><path d="M177 398 Q177 395 180 395 H186 L190 399 H200 Q203 399 203 402 V414 Q203 417 200 417 H180 Q177 417 177 414 Z" fill="#e7effd" stroke="#3574f0" stroke-width="2" stroke-linejoin="round"/><path d="M140.5 450.25 L148 457.75 L155.5 450.25" fill="none" stroke="#6c707e" stroke-width="1.8" stroke-linecap="round" stroke-linejoin="round"/><path d="M177 446 Q177 443 180 443 H186 L190 447 H200 Q203 447 203 450 V462 Q203 465 200 465 H180 Q177 465 177 462 Z" fill="#e7effd" stroke="#3574f0" stroke-width="2" stroke-linejoin="round"/><path d="M182.25 494.5 L189.75 502 L182.25 509.5" fill="none" stroke="#6c707e" stroke-width="1.8" stroke-linecap="round" stroke-linejoin="round"/><g transform="translate(214,490)"><path d="M22 12 V4 Q22 1 19 1 H4 Q1 1 1 4 V19 Q1 22 4 22 H12" fill="none" stroke="#6c707e" stroke-width="2"/><path d="M1 7 H22 M8 1 V22 M15 1 V9" stroke="#6c707e" stroke-width="2" fill="none"/><circle cx="19" cy="19" r="5" fill="#f7f8fa" stroke="#3574f0" stroke-width="2"/><path d="M22.5 22.5 L26 26" stroke="#3574f0" stroke-width="2" stroke-linecap="round"/></g><path d="M182.25 542.5 L189.75 550 L182.25 557.5" fill="none" stroke="#6c707e" stroke-width="1.8" stroke-linecap="round" stroke-linejoin="round"/><g transform="translate(214,538)"><path d="M22 12 V4 Q22 1 19 1 H4 Q1 1 1 4 V19 Q1 22 4 22 H12" fill="none" stroke="#6c707e" stroke-width="2"/><path d="M1 7 H22 M8 1 V22 M15 1 V9" stroke="#6c707e" stroke-width="2" fill="none"/><circle cx="19" cy="19" r="5" fill="#f7f8fa" stroke="#3574f0" stroke-width="2"/><path d="M22.5 22.5 L26 26" stroke="#3574f0" stroke-width="2" stroke-linecap="round"/></g><path d="M182.25 590.5 L189.75 598 L182.25 605.5" fill="none" stroke="#6c707e" stroke-width="1.8" stroke-linecap="round" stroke-linejoin="round"/><g transform="translate(214,586)"><path d="M22 12 V4 Q22 1 19 1 H4 Q1 1 1 4 V19 Q1 22 4 22 H12" fill="none" stroke="#6c707e" stroke-width="2"/><path d="M1 7 H22 M8 1 V22 M15 1 V9" stroke="#6c707e" stroke-width="2" fill="none"/><circle cx="19" cy="19" r="5" fill="#f7f8fa" stroke="#3574f0" stroke-width="2"/><path d="M22.5 22.5 L26 26" stroke="#3574f0" stroke-width="2" stroke-linecap="round"/></g><path d="M182.25 638.5 L189.75 646 L182.25 653.5" fill="none" stroke="#6c707e" stroke-width="1.8" stroke-linecap="round" stroke-linejoin="round"/><g transform="translate(214,634)"><path d="M22 12 V4 Q22 1 19 1 H4 Q1 1 1 4 V19 Q1 22 4 22 H12" fill="none" stroke="#6c707e" stroke-width="2"/><path d="M1 7 H22 M8 1 V22 M15 1 V9" stroke="#6c707e" stroke-width="2" fill="none"/><circle cx="19" cy="19" r="5" fill="#f7f8fa" stroke="#3574f0" stroke-width="2"/><path d="M22.5 22.5 L26 26" stroke="#3574f0" stroke-width="2" stroke-linecap="round"/></g><path d="M182.25 686.5 L189.75 694 L182.25 701.5" fill="none" stroke="#6c707e" stroke-width="1.8" stroke-linecap="round" stroke-linejoin="round"/><g transform="translate(214,682)"><path d="M22 12 V4 Q22 1 19 1 H4 Q1 1 1 4 V19 Q1 22 4 22 H12" fill="none" stroke="#6c707e" stroke-width="2"/><path d="M1 7 H22 M8 1 V22 M15 1 V9" stroke="#6c707e" stroke-width="2" fill="none"/><circle cx="19" cy="19" r="5" fill="#f7f8fa" stroke="#3574f0" stroke-width="2"/><path d="M22.5 22.5 L26 26" stroke="#3574f0" stroke-width="2" stroke-linecap="round"/></g><path d="M182.25 734.5 L189.75 742 L182.25 749.5" fill="none" stroke="#6c707e" stroke-width="1.8" stroke-linecap="round" stroke-linejoin="round"/><g transform="translate(214,730)"><path d="M22 12 V4 Q22 1 19 1 H4 Q1 1 1 4 V19 Q1 22 4 22 H12" fill="none" stroke="#6c707e" stroke-width="2"/><path d="M1 7 H22 M8 1 V22 M15 1 V9" stroke="#6c707e" stroke-width="2" fill="none"/><circle cx="19" cy="19" r="5" fill="#f7f8fa" stroke="#3574f0" stroke-width="2"/><path d="M22.5 22.5 L26 26" stroke="#3574f0" stroke-width="2" stroke-linecap="round"/></g><path d="M144.25 782.5 L151.75 790 L144.25 797.5" fill="none" stroke="#6c707e" stroke-width="1.8" stroke-linecap="round" stroke-linejoin="round"/><path d="M177 782 Q177 779 180 779 H186 L190 783 H200 Q203 783 203 786 V798 Q203 801 200 801 H180 Q177 801 177 798 Z" fill="#e7effd" stroke="#3574f0" stroke-width="2" stroke-linejoin="round"/><path d="M144.25 830.5 L151.75 838 L144.25 845.5" fill="none" stroke="#6c707e" stroke-width="1.8" stroke-linecap="round" stroke-linejoin="round"/><path d="M177 830 Q177 827 180 827 H186 L190 831 H200 Q203 831 203 834 V846 Q203 849 200 849 H180 Q177 849 177 846 Z" fill="#e7effd" stroke="#3574f0" stroke-width="2" stroke-linejoin="round"/><g transform="translate(467,109) scale(1.0)"><path d="M3.5 0.8 C1.2 0.8 0 2.8 0 5.5 C0 10.5 2 15.5 4.8 18.8 C5.5 19.6 6.5 19 7.2 18 L8.2 16.5 C9 17.5 10.5 17.6 12 17 L12.3 17 C12.4 21 12.8 26 15.5 26 C18.2 26 18.6 21.5 18.7 17 C20 17.3 22.3 17.5 24 16.5 C22.8 15.8 21.8 15.2 21.2 14.8 C23.2 11.5 24.3 8 24.3 5 C24.3 2 22.5 0.2 19.5 0.2 C18 0.2 17 0.4 16.3 0.8 C14.8 0.3 12 0.3 9.5 1.2 C8 0.9 5.5 0.8 3.5 0.8 Z" fill="#139ddf"/><path d="M9.5 1.2 C8 3.5 7.5 7 7.8 10.5 C8.1 13.5 9.5 15.5 11.8 17 M8.2 5.5 C9.5 4.6 11.3 4.8 11.8 6.8 L12.2 14.5 M16.3 0.8 C19 2.3 20.3 5 20.4 8.5 C20.5 11.5 19.8 13.5 18.7 15.5 M17.3 5.2 C18.3 5.5 19.5 6 20.3 6.2" fill="none" stroke="#a9efff" stroke-opacity="0.85" stroke-width="0.8"/></g><g transform="translate(631,115)" fill="none" stroke="#a8adbd" stroke-width="1.8" stroke-linecap="round" stroke-linejoin="round" ><path d="M1 1L14 14M14 1L1 14"/></g><rect x="695" y="110" width="26" height="24" rx="3" fill="#ebecf0" stroke="#6c707e" stroke-width="2"/><path d="M695 116H721M704.1 110V134M711.9 110V134" stroke="#6c707e" stroke-width="2"/><circle cx="1726" cy="113" r="2.6" fill="#6c707e"/><circle cx="1726" cy="124" r="2.6" fill="#6c707e"/><circle cx="1726" cy="135" r="2.6" fill="#6c707e"/><g transform="translate(469,183)" fill="none" stroke="#208a3c" stroke-width="2.4" stroke-linecap="round" stroke-linejoin="round" ><path d="M2 2.5V23.5L23 13Z"/></g><g transform="translate(532,182)" fill="none" stroke="#6c707e" stroke-width="2" stroke-linecap="round" stroke-linejoin="round" ><circle cx="14" cy="14" r="13"/><path d="M14 7V14L18 18"/></g><g transform="translate(584,182)" fill="none" stroke="#6c707e" stroke-width="2" stroke-linecap="round" stroke-linejoin="round" ><circle cx="14" cy="14" r="13"/><path d="M9.5 8.5V21.5"/><circle cx="14.4" cy="13.3" r="4.9"/></g><path d="M644.73 186.35 L646.50 182.86 L653.50 182.86 L655.27 186.35 L655.72 186.61 L659.63 186.40 L663.13 192.46 L661.00 195.74 L661.00 196.26 L663.13 199.54 L659.63 205.60 L655.72 205.39 L655.27 205.65 L653.50 209.14 L646.50 209.14 L644.73 205.65 L644.28 205.39 L640.37 205.60 L636.87 199.54 L639.00 196.26 L639.00 195.74 L636.87 192.46 L640.37 186.40 L644.28 186.61Z" fill="none" stroke="#6c707e" stroke-width="2" stroke-linejoin="round"/><circle cx="650" cy="196" r="4.6" fill="none" stroke="#6c707e" stroke-width="2"/><path d="M812.5 195.25 L820 202.75 L827.5 195.25" fill="none" stroke="#6c707e" stroke-width="2" stroke-linecap="round" stroke-linejoin="round"/><g transform="translate(855,185)" fill="none" stroke="#c9ccd6" stroke-width="2.4" stroke-linecap="round" stroke-linejoin="round" ><path d="M2 12L10 20L25 3"/></g><g transform="translate(907,183)" fill="none" stroke="#c9ccd6" stroke-width="2.2" stroke-linecap="round" stroke-linejoin="round" ><path d="M6 6A11 11 0 1 1 3 14"/><path d="M3 2V8H9"/></g><path d="M1181.5 195.25 L1189 202.75 L1196.5 195.25" fill="none" stroke="#6c707e" stroke-width="2" stroke-linecap="round" stroke-linejoin="round"/><g transform="translate(1236,182)" fill="none" stroke="#6c707e" stroke-width="2" stroke-linecap="round" stroke-linejoin="round" ><path d="M1 1.5H27M1 26.5H27"/><rect x="1" y="6" width="26" height="16" rx="2"/><path d="M1 14H27M9.5 6V22M18.5 6V22"/></g><g transform="translate(1352,183)" fill="none" stroke="#6c707e" stroke-width="2" stroke-linecap="round" stroke-linejoin="round" ><rect x="1" y="13" width="13" height="13" rx="1.5" fill="#ebecf0"/><rect x="18" y="1" width="10" height="10" rx="1.5"/><rect x="18" y="16" width="10" height="10" rx="1.5"/><path d="M14 21H18M14 19V6H18"/></g><path d="M1536.5 195.25 L1544 202.75 L1551.5 195.25" fill="none" stroke="#6c707e" stroke-width="2" stroke-linecap="round" stroke-linejoin="round"/><g transform="translate(1582,182)" fill="none" stroke="#6c707e" stroke-width="2" stroke-linecap="round" stroke-linejoin="round" ><path d="M28.5 5 V22.6 H18.5 C13.5 22.6 9.8 18.6 9.8 13.8 C9.8 9 13.5 5 18.5 5 Z"/><path d="M9.8 11 H3 V16.7 H9.8"/><path d="M28.5 8.8 H33.7 M28.5 18.9 H33.7"/></g><circle cx="1612.2" cy="208" r="4.7" fill="#21c32a" stroke="#1a9a22" stroke-width="0.8"/><path d="M1720.5 195.25 L1728 202.75 L1735.5 195.25" fill="none" stroke="#6c707e" stroke-width="2" stroke-linecap="round" stroke-linejoin="round"/><path d="M617 601.8C617 598 612.1 595.5 612.1 590.5C612.1 585 616.3 580.9 621.6 580.9C627 580.9 631.2 585 631.2 590.5C631.2 595.5 626.9 598 626.9 601.8Z" fill="#f9ab0a"/><rect x="617.2" y="604" width="9.7" height="2.2" fill="#575a62"/><path d="M618.2 608H625.9C625.9 609.5 624.5 610.2 622 610.2S618.2 609.5 618.2 608Z" fill="#575a62"/><g transform="translate(1726,246)" fill="none" stroke="#3b9e5a" stroke-width="2.8" stroke-linecap="round" stroke-linejoin="round" ><path d="M2 10L9 17L23 3"/></g><path d="M48 997 L48 1005 L40 1005 Z" fill="#6c707e" stroke="none"/><g transform="translate(19,1039)" fill="none" stroke="#c9ccd6" stroke-width="2.4" stroke-linecap="round" stroke-linejoin="round" ><path d="M2 10L9 17L24 2"/></g><g transform="translate(19,1086)" fill="none" stroke="#c9ccd6" stroke-width="2.2" stroke-linecap="round" stroke-linejoin="round" ><path d="M7 6A11 11 0 1 1 4 14"/><path d="M4 1V7H10"/></g><g transform="translate(19,1153)" fill="none" stroke="#6c707e" stroke-width="2" stroke-linecap="round" stroke-linejoin="round" ><rect x="1" y="1" width="24" height="24" rx="3"/><path d="M12 1V25M12 12H25"/></g><g transform="translate(83,978)" fill="none" stroke="#6c707e" stroke-width="2" stroke-linecap="round" stroke-linejoin="round" ><path d="M2 8L8.5 2L15 8M2 16L8.5 22L15 16"/></g><g transform="translate(135,977)" fill="none" stroke="#6c707e" stroke-width="2" stroke-linecap="round" stroke-linejoin="round" ><path d="M2 2L8.5 8L15 2M2 24L8.5 18L15 24"/></g><g transform="translate(194,978)" fill="none" stroke="#6c707e" stroke-width="2" stroke-linecap="round" stroke-linejoin="round" ><path d="M1 11.5C5 4 10 1.5 15.5 1.5S26 4 30 11.5C26 19 21 21.5 15.5 21.5S5 19 1 11.5Z"/><circle cx="15.5" cy="11.5" r="4.5"/></g><path d="M228 1001 L228 1009 L220 1009 Z" fill="#6c707e" stroke="none"/><g transform="translate(248,974)" fill="none" stroke="#6c707e" stroke-width="2" stroke-linecap="round" stroke-linejoin="round" ><path d="M20 10V24Q20 26 18 26H4Q2 26 2 24V13Q2 11 4 11H13"/><path d="M24 1V13M18 7H30"/></g><g transform="translate(313,975)" fill="none" stroke="#6c707e" stroke-width="2" stroke-linecap="round" stroke-linejoin="round" ><path d="M14 3V27M2 15H26"/></g><path d="M347 1000 L347 1008 L339 1008 Z" fill="#6c707e" stroke="none"/><path d="M98.5 1054.25 L106 1061.75 L113.5 1054.25" fill="none" stroke="#6c707e" stroke-width="1.8" stroke-linecap="round" stroke-linejoin="round"/><path d="M135 1050 Q135 1047 138 1047 H144 L148 1051 H158 Q161 1051 161 1054 V1066 Q161 1069 158 1069 H138 Q135 1069 135 1066 Z" fill="#ebecf0" stroke="#6c707e" stroke-width="2" stroke-linejoin="round"/><path d="M136.5 1102.25 L144 1109.75 L151.5 1102.25" fill="none" stroke="#6c707e" stroke-width="1.8" stroke-linecap="round" stroke-linejoin="round"/><g transform="translate(174,1093) scale(1.0)"><path d="M3.5 0.8 C1.2 0.8 0 2.8 0 5.5 C0 10.5 2 15.5 4.8 18.8 C5.5 19.6 6.5 19 7.2 18 L8.2 16.5 C9 17.5 10.5 17.6 12 17 L12.3 17 C12.4 21 12.8 26 15.5 26 C18.2 26 18.6 21.5 18.7 17 C20 17.3 22.3 17.5 24 16.5 C22.8 15.8 21.8 15.2 21.2 14.8 C23.2 11.5 24.3 8 24.3 5 C24.3 2 22.5 0.2 19.5 0.2 C18 0.2 17 0.4 16.3 0.8 C14.8 0.3 12 0.3 9.5 1.2 C8 0.9 5.5 0.8 3.5 0.8 Z" fill="#139ddf"/><path d="M9.5 1.2 C8 3.5 7.5 7 7.8 10.5 C8.1 13.5 9.5 15.5 11.8 17 M8.2 5.5 C9.5 4.6 11.3 4.8 11.8 6.8 L12.2 14.5 M16.3 0.8 C19 2.3 20.3 5 20.4 8.5 C20.5 11.5 19.8 13.5 18.7 15.5 M17.3 5.2 C18.3 5.5 19.5 6 20.3 6.2" fill="none" stroke="#a9efff" stroke-opacity="0.85" stroke-width="0.8"/></g><path d="M174.5 1150.25 L182 1157.75 L189.5 1150.25" fill="none" stroke="#6c707e" stroke-width="1.8" stroke-linecap="round" stroke-linejoin="round"/><g transform="translate(206,1140)" fill="none" stroke="#6c707e" stroke-width="2" stroke-linecap="round" stroke-linejoin="round" ><path d="M28.5 5 V22.6 H18.5 C13.5 22.6 9.8 18.6 9.8 13.8 C9.8 9 13.5 5 18.5 5 Z"/><path d="M9.8 11 H3 V16.7 H9.8"/><path d="M28.5 8.8 H33.7 M28.5 18.9 H33.7"/></g><circle cx="236.2" cy="1166" r="4.7" fill="#21c32a" stroke="#1a9a22" stroke-width="0.8"/><g transform="translate(250,1189) scale(1.0)"><path d="M3.5 0.8 C1.2 0.8 0 2.8 0 5.5 C0 10.5 2 15.5 4.8 18.8 C5.5 19.6 6.5 19 7.2 18 L8.2 16.5 C9 17.5 10.5 17.6 12 17 L12.3 17 C12.4 21 12.8 26 15.5 26 C18.2 26 18.6 21.5 18.7 17 C20 17.3 22.3 17.5 24 16.5 C22.8 15.8 21.8 15.2 21.2 14.8 C23.2 11.5 24.3 8 24.3 5 C24.3 2 22.5 0.2 19.5 0.2 C18 0.2 17 0.4 16.3 0.8 C14.8 0.3 12 0.3 9.5 1.2 C8 0.9 5.5 0.8 3.5 0.8 Z" fill="#139ddf"/><path d="M9.5 1.2 C8 3.5 7.5 7 7.8 10.5 C8.1 13.5 9.5 15.5 11.8 17 M8.2 5.5 C9.5 4.6 11.3 4.8 11.8 6.8 L12.2 14.5 M16.3 0.8 C19 2.3 20.3 5 20.4 8.5 C20.5 11.5 19.8 13.5 18.7 15.5 M17.3 5.2 C18.3 5.5 19.5 6 20.3 6.2" fill="none" stroke="#a9efff" stroke-opacity="0.85" stroke-width="0.8"/></g><path d="M174.5 1246.25 L182 1253.75 L189.5 1246.25" fill="none" stroke="#6c707e" stroke-width="1.8" stroke-linecap="round" stroke-linejoin="round"/><g transform="translate(206,1236)" fill="none" stroke="#6c707e" stroke-width="2" stroke-linecap="round" stroke-linejoin="round" ><path d="M28.5 5 V22.6 H18.5 C13.5 22.6 9.8 18.6 9.8 13.8 C9.8 9 13.5 5 18.5 5 Z"/><path d="M9.8 11 H3 V16.7 H9.8"/><path d="M28.5 8.8 H33.7 M28.5 18.9 H33.7"/></g><circle cx="236.2" cy="1262" r="4.7" fill="#21c32a" stroke="#1a9a22" stroke-width="0.8"/><rect x="249" y="1287" width="26" height="22" rx="3" fill="#ebecf0" stroke="#6c707e" stroke-width="2"/><path d="M249 1293H275M258.1 1287V1309M265.9 1287V1309" stroke="#6c707e" stroke-width="2"/><g transform="translate(554,978)" fill="none" stroke="#6c707e" stroke-width="2" stroke-linecap="round" stroke-linejoin="round" ><rect x="1" y="1" width="26" height="22" rx="3" fill="#ebecf0"/><path d="M6 7L10 10.5L6 14M12 16H18"/></g><rect x="735" y="979" width="26" height="22" rx="3" fill="#ebecf0" stroke="#6c707e" stroke-width="2"/><path d="M735 985H761M744.1 979V1001M751.9 979V1001" stroke="#6c707e" stroke-width="2"/><g transform="translate(894,983)" fill="none" stroke="#a8adbd" stroke-width="1.8" stroke-linecap="round" stroke-linejoin="round" ><path d="M1 1L14 14M14 1L1 14"/></g><g transform="translate(558,1047)" fill="none" stroke="#c3c6cf" stroke-width="2" stroke-linecap="round" stroke-linejoin="round" ><path d="M2 1V21M18 1L8 11L18 21"/></g><g transform="translate(613,1047)" fill="none" stroke="#c3c6cf" stroke-width="2" stroke-linecap="round" stroke-linejoin="round" ><path d="M11 1L1 11L11 21"/></g><path d="M736.5 1058.25 L744 1065.75 L751.5 1058.25" fill="none" stroke="#6c707e" stroke-width="2" stroke-linecap="round" stroke-linejoin="round"/><path d="M879.5 1049.0 L888.5 1058 L879.5 1067.0" fill="none" stroke="#6c707e" stroke-width="2" stroke-linecap="round" stroke-linejoin="round"/><g transform="translate(926,1047)" fill="none" stroke="#6c707e" stroke-width="2" stroke-linecap="round" stroke-linejoin="round" ><path d="M1 1L11 11L1 21M18 1V21"/></g><g transform="translate(986,1044)" fill="none" stroke="#6c707e" stroke-width="2" stroke-linecap="round" stroke-linejoin="round" ><path d="M4.5 14 A11.5 11.5 0 0 1 24 6.5"/><path d="M1 10.5 L4.5 16 L9 11"/><path d="M10 23.8 A11.5 11.5 0 0 0 27.5 14"/><path d="M23 15 L27.5 10 L31.5 15"/></g><g transform="translate(1040,1044)" fill="none" stroke="#6c707e" stroke-width="2" stroke-linecap="round" stroke-linejoin="round" ><circle cx="14" cy="14" r="13"/><path d="M14 7V14L18 18"/></g><path d="M1072 1068 L1072 1076 L1064 1076 Z" fill="#6c707e" stroke="none"/><g transform="translate(1162,1046)" fill="none" stroke="#6c707e" stroke-width="2" stroke-linecap="round" stroke-linejoin="round" ><path d="M5 1H16M6.5 1V9L2 15H19L14.5 9V1M10.5 15V26"/></g><path d="M1432.5 1058.25 L1440 1065.75 L1447.5 1058.25" fill="none" stroke="#6c707e" stroke-width="2" stroke-linecap="round" stroke-linejoin="round"/><g transform="translate(1490,1046)" fill="none" stroke="#6c707e" stroke-width="2" stroke-linecap="round" stroke-linejoin="round" ><path d="M12 1V16M5 9L12 16L19 9M1 15V23H23V15"/></g><g transform="translate(1542,1046)" fill="none" stroke="#6c707e" stroke-width="2" stroke-linecap="round" stroke-linejoin="round" ><path d="M12 17V2M5 9L12 2L19 9M1 15V23H23V15"/></g><g transform="translate(1590,1044)" fill="none" stroke="#6c707e" stroke-width="2" stroke-linecap="round" stroke-linejoin="round" ><path d="M1 20H18M13 15L18 20L13 25"/><path d="M32 6H15M20 1L15 6L20 11"/></g><path d="M1626 1065 L1626 1073 L1618 1073 Z" fill="#6c707e" stroke="none"/><g transform="translate(1656,1047)" fill="none" stroke="#6c707e" stroke-width="2" stroke-linecap="round" stroke-linejoin="round" ><path d="M1 11.5C5 4 10 1.5 16 1.5S27 4 31 11.5C27 19 22 21.5 16 21.5S5 19 1 11.5Z"/><circle cx="16" cy="11.5" r="5"/></g><path d="M1692 1067 L1692 1075 L1684 1075 Z" fill="#6c707e" stroke="none"/><path d="M1720.73 1048.35 L1722.50 1044.86 L1729.50 1044.86 L1731.27 1048.35 L1731.72 1048.61 L1735.63 1048.40 L1739.13 1054.46 L1737.00 1057.74 L1737.00 1058.26 L1739.13 1061.54 L1735.63 1067.60 L1731.72 1067.39 L1731.27 1067.65 L1729.50 1071.14 L1722.50 1071.14 L1720.73 1067.65 L1720.28 1067.39 L1716.37 1067.60 L1712.87 1061.54 L1715.00 1058.26 L1715.00 1057.74 L1712.87 1054.46 L1716.37 1048.40 L1720.28 1048.61Z" fill="none" stroke="#6c707e" stroke-width="2" stroke-linejoin="round"/><circle cx="1726" cy="1058" r="4.6" fill="none" stroke="#6c707e" stroke-width="2"/><path d="M1744 1067 L1744 1075 L1736 1075 Z" fill="#6c707e" stroke="none"/><g transform="translate(618,1108)" fill="none" stroke="#6c707e" stroke-width="2" stroke-linecap="round" stroke-linejoin="round" ><rect x="1" y="1" width="26" height="22" rx="3"/><path d="M9 1V23"/><rect x="2" y="2" width="7" height="20" fill="#ebecf0" stroke="none"/></g><path d="M1009 1118L1014 1112L1019 1118Z M1009 1122L1014 1128L1019 1122Z" fill="#6c707e"/><g transform="translate(1048,1108)" fill="none" stroke="#6c707e" stroke-width="2" stroke-linecap="round" stroke-linejoin="round" ><rect x="1" y="1" width="26" height="22" rx="3"/><path d="M9 1V23"/><rect x="2" y="2" width="7" height="20" fill="#ebecf0" stroke="none"/></g><path d="M1213 1118L1218 1112L1223 1118Z M1213 1122L1218 1128L1223 1122Z" fill="#6c707e"/><g transform="translate(1252,1108)" fill="none" stroke="#6c707e" stroke-width="2" stroke-linecap="round" stroke-linejoin="round" ><rect x="1" y="1" width="26" height="22" rx="3"/><path d="M9 1V23"/><rect x="2" y="2" width="7" height="20" fill="#ebecf0" stroke="none"/></g><path d="M1481 1118L1486 1112L1491 1118Z M1481 1122L1486 1128L1491 1122Z" fill="#6c707e"/><g transform="translate(1520,1108)" fill="none" stroke="#6c707e" stroke-width="2" stroke-linecap="round" stroke-linejoin="round" ><rect x="1" y="1" width="26" height="22" rx="3"/><path d="M9 1V23"/><rect x="2" y="2" width="7" height="20" fill="#ebecf0" stroke="none"/></g><path d="M1733 1118L1738 1112L1743 1118Z M1733 1122L1738 1128L1743 1122Z" fill="#6c707e"/><path d="M298.0 1343.5 L306.0 1351 L298.0 1358.5" fill="none" stroke="#6c707e" stroke-width="2" stroke-linecap="round" stroke-linejoin="round"/><path d="M502.0 1343.5 L510.0 1351 L502.0 1358.5" fill="none" stroke="#6c707e" stroke-width="2" stroke-linecap="round" stroke-linejoin="round"/><g transform="translate(533,1337) scale(1.0)"><path d="M3.5 0.8 C1.2 0.8 0 2.8 0 5.5 C0 10.5 2 15.5 4.8 18.8 C5.5 19.6 6.5 19 7.2 18 L8.2 16.5 C9 17.5 10.5 17.6 12 17 L12.3 17 C12.4 21 12.8 26 15.5 26 C18.2 26 18.6 21.5 18.7 17 C20 17.3 22.3 17.5 24 16.5 C22.8 15.8 21.8 15.2 21.2 14.8 C23.2 11.5 24.3 8 24.3 5 C24.3 2 22.5 0.2 19.5 0.2 C18 0.2 17 0.4 16.3 0.8 C14.8 0.3 12 0.3 9.5 1.2 C8 0.9 5.5 0.8 3.5 0.8 Z" fill="#139ddf"/><path d="M9.5 1.2 C8 3.5 7.5 7 7.8 10.5 C8.1 13.5 9.5 15.5 11.8 17 M8.2 5.5 C9.5 4.6 11.3 4.8 11.8 6.8 L12.2 14.5 M16.3 0.8 C19 2.3 20.3 5 20.4 8.5 C20.5 11.5 19.8 13.5 18.7 15.5 M17.3 5.2 C18.3 5.5 19.5 6 20.3 6.2" fill="none" stroke="#a9efff" stroke-opacity="0.85" stroke-width="0.8"/></g><g transform="translate(1639,1339)" fill="none" stroke="#6c707e" stroke-width="2" stroke-linecap="round" stroke-linejoin="round" ><rect x="1" y="11" width="18" height="13" rx="2.5"/><path d="M13 11V6.5C13 3.5 15.5 1.5 18.5 1.5S24 3.5 24 6.5V8"/><path d="M10 15.5V19.5"/></g><g transform="translate(1699,1338)" fill="none" stroke="#6c707e" stroke-width="2" stroke-linecap="round" stroke-linejoin="round" ><path d="M5 18V10C5 5 8.5 2 13 2S21 5 21 10V18L25 24H1Z"/><path d="M9.5 27.5A3.5 3 0 0 0 16.5 27.5Z" fill="#6c707e"/></g><path d="M0 1364 A18 18 0 0 0 18 1382 H0 Z" fill="#e9e9eb"/><path d="M1764 1364 A18 18 0 0 1 1746 1382 H1764 Z" fill="#e9e9eb"/><rect x="1760" y="1376" width="4" height="6" fill="#000"/></svg>
</body></html>
